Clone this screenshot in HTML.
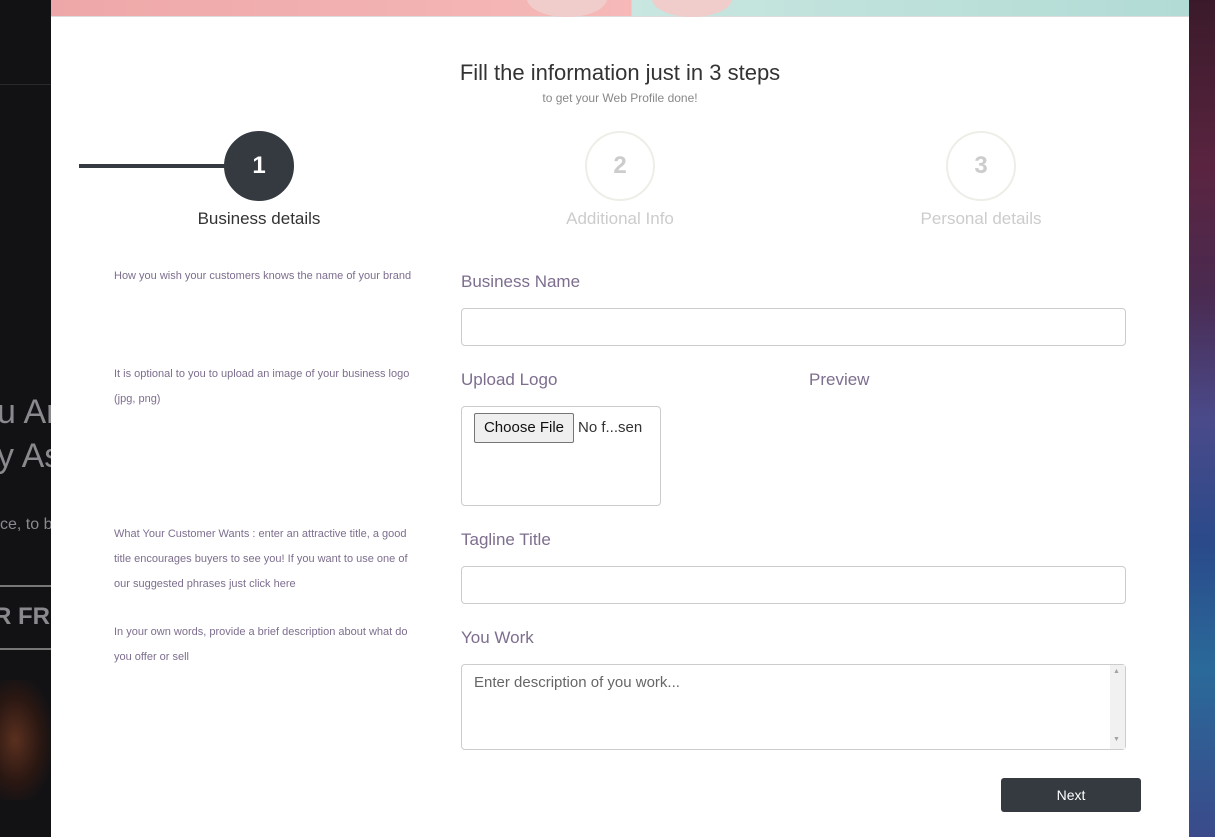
<!DOCTYPE html>
<html><head><meta charset="utf-8"><style>
*{margin:0;padding:0;box-sizing:border-box}
body{width:1215px;height:837px;overflow:hidden;position:relative;background:#141417;font-family:"Liberation Sans",sans-serif}
.a{position:absolute}
.bgL{left:0;top:0;width:51px;height:837px;background:#121215}
.bgR{left:1189px;top:0;width:26px;height:837px;background:linear-gradient(180deg,#3a1a2a 0%,#5a2440 20%,#4a2a50 35%,#4a4a8a 50%,#2a4a8a 65%,#2a6a9a 80%,#3a4a8a 100%)}
.modal{left:51px;top:0;width:1138px;height:837px;background:#fff}
.banner{left:51px;top:0;width:1138px;height:17px;background:linear-gradient(90deg,#eea7a8 0%,#f6b9b8 51%,#c9e6e0 51%,#b2dbd5 100%);border-bottom:1px solid #ddd}
.help{color:#7d6e8e;font-size:11px;line-height:25px;left:114px;width:312px}
.lbl{color:#7d6e8e;font-size:17px;left:461px}
.inp{border:1px solid #ccc;border-radius:4px;background:#fff}
.circ{width:70px;height:70px;border-radius:50%;text-align:center;line-height:66px;font-size:24px;font-weight:bold}
.step{font-size:17px;text-align:center;width:200px}
</style></head><body>
<div class="a bgL"></div>
<div class="a" style="left:0;top:84px;width:51px;height:1px;background:#2a2a2e"></div>
<div class="a" style="left:0;top:390px;color:#8a8a8e;font-size:34px;line-height:44px;white-space:nowrap;width:51px;overflow:hidden"><div style="margin-left:-3px">u Ar<br>y As</div></div>
<div class="a" style="left:0;top:516px;color:#8a8a8e;font-size:16px;width:51px;overflow:hidden;white-space:nowrap">ce, to b</div>
<div class="a" style="left:0;top:585px;width:51px;height:2px;background:#777"></div>
<div class="a" style="left:0;top:603px;color:#8a8a8e;font-size:24px;font-weight:bold;width:51px;overflow:hidden;white-space:nowrap"><span style="margin-left:-6px">R FRE</span></div>
<div class="a" style="left:0;top:648px;width:51px;height:2px;background:#777"></div>
<div class="a" style="left:0;top:680px;width:51px;height:120px;background:radial-gradient(ellipse at 30% 50%,#5a301f 0%,#2a1712 50%,#121215 80%)"></div>
<div class="a bgR"></div>
<div class="a modal"></div>
<div class="a banner"></div>
<div class="a" style="left:527px;top:-20px;width:80px;height:37px;border-radius:50%;background:#f0cccb"></div>
<div class="a" style="left:652px;top:-20px;width:80px;height:37px;border-radius:50%;background:#f0cccb"></div>

<div class="a" style="left:51px;width:1138px;top:60px;text-align:center;font-size:22px;color:#333">Fill the information just in 3 steps</div>
<div class="a" style="left:51px;width:1138px;top:91px;text-align:center;font-size:12px;color:#888">to get your Web Profile done!</div>

<div class="a" style="left:79px;top:164px;width:150px;height:4px;background:#343a40"></div>
<div class="a circ" style="left:224px;top:131px;background:#343a40;color:#fff;border:2px solid #343a40">1</div>
<div class="a circ" style="left:585px;top:131px;border:2px solid #eeeee8;color:#ccc">2</div>
<div class="a circ" style="left:946px;top:131px;border:2px solid #eeeee8;color:#ccc">3</div>
<div class="a step" style="left:159px;top:209px;color:#333">Business details</div>
<div class="a step" style="left:520px;top:209px;color:#ccc">Additional Info</div>
<div class="a step" style="left:881px;top:209px;color:#ccc">Personal details</div>

<div class="a help" style="top:264px">How you wish your customers knows the name of your brand</div>
<div class="a help" style="top:362px">It is optional to you to upload an image of your business logo (jpg, png)</div>
<div class="a help" style="top:522px">What Your Customer Wants : enter an attractive title, a good title encourages buyers to see you! If you want to use one of our suggested phrases just click here</div>
<div class="a help" style="top:620px">In your own words, provide a brief description about what do you offer or sell</div>

<div class="a lbl" style="top:272px">Business Name</div>
<div class="a inp" style="left:461px;top:308px;width:665px;height:38px"></div>
<div class="a lbl" style="top:370px">Upload Logo</div>
<div class="a lbl" style="top:370px;left:809px">Preview</div>
<div class="a inp" style="left:461px;top:406px;width:200px;height:100px"></div>
<div class="a" style="left:474px;top:413px;width:100px;height:30px;background:#efefef;border:1px solid #767676;border-radius:2px;font-size:15px;line-height:28px;text-align:center;color:#111">Choose File</div>
<div class="a" style="left:578px;top:419px;font-size:15px;color:#333">No f...sen</div>
<div class="a lbl" style="top:530px">Tagline Title</div>
<div class="a inp" style="left:461px;top:566px;width:665px;height:38px"></div>
<div class="a lbl" style="top:628px">You Work</div>
<div class="a inp" style="left:461px;top:664px;width:665px;height:86px"></div>
<div class="a" style="left:1110px;top:665px;width:15px;height:84px;background:#f1f1f1"></div>
<div class="a" style="left:1113px;top:668px;font-size:7px;color:#a3a3a3">▲</div>
<div class="a" style="left:1113px;top:736px;font-size:7px;color:#a3a3a3">▼</div>
<div class="a" style="left:474px;top:674px;font-size:15px;color:#666">Enter description of you work...</div>
<div class="a" style="left:1001px;top:778px;width:140px;height:34px;background:#343a40;border-radius:3px;color:#fff;font-size:14px;line-height:34px;text-align:center">Next</div>
</body></html>
